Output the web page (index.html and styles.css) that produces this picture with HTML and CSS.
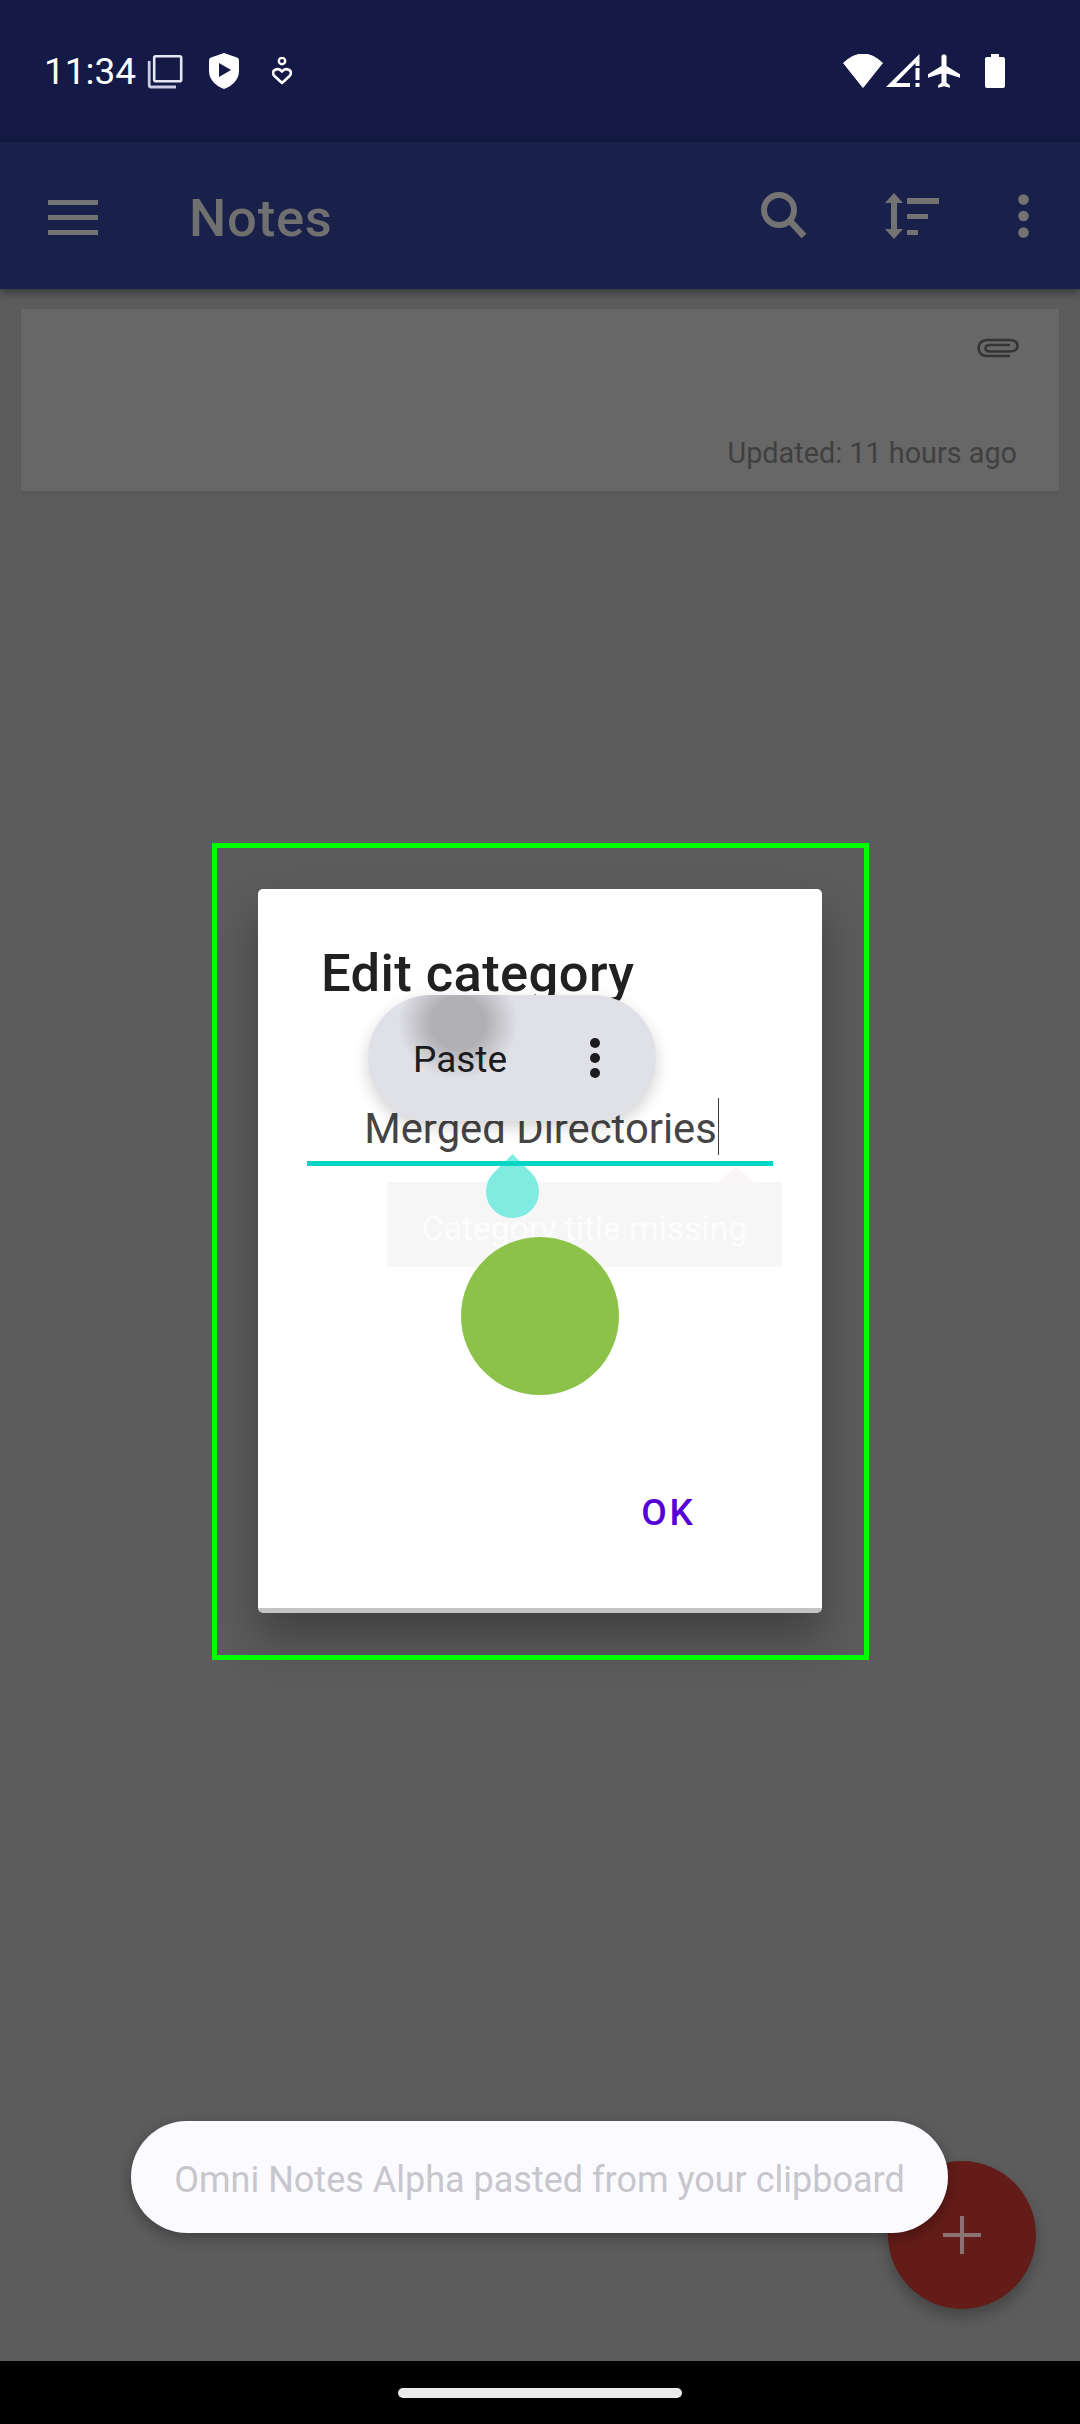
FILE: index.html
```html
<!DOCTYPE html>
<html lang="en">
<head>
    <meta charset="UTF-8">
    <meta name="viewport" content="width=device-width, initial-scale=1.0">
    <title>Notes - Edit category</title>
    <link rel="stylesheet" href="styles.css">
</head>
<body>
    <div class="screen">
        <div class="status">
            <span class="time">11:34</span>
            <svg class="ic-recents" width="36" height="35" viewBox="0 0 36 35">
                <rect x="7.2" y="2.2" width="27" height="25" rx="1.5" fill="none" stroke="#e4e6f2" stroke-width="2.6"/>
                <path d="M2.2 7V31q0 2 2 2H29" fill="none" stroke="#c9cce2" stroke-width="2.8"/>
            </svg>
            <svg class="ic-shield" width="30" height="36" viewBox="0 0 30 36">
                <path d="M15 0 28 4.5q2 .7 2 3V18C30 27 23 33 15 36 7 33 0 27 0 18V7.500q0-2.300 2-3z" fill="#fff"/>
                <path d="M10 10 22 17 10 24z" fill="#141a45"/>
            </svg>
            <svg class="ic-heart" width="20" height="28" viewBox="0 0 20 28">
                <circle cx="10" cy="4" r="3.200" fill="none" stroke="#fff" stroke-width="2.400"/>
                <path d="M10 26 2.500 19C.5 17 .8 14 2.800 13 5 11.800 8 12 10 14.500 12 12 15 11.800 17.200 13 19.200 14 19.500 17 17.500 19z" fill="none" stroke="#fff" stroke-width="2.600" stroke-linejoin="round"/>
            </svg>
            <div class="status-right">
                <svg class="ic-wifi" width="40" height="34" viewBox="0 0 40 34">
                    <path d="M.5 9Q20-9 39.500 9L20 33.500z" fill="#fff" stroke="#fff" stroke-linejoin="round"/>
                </svg>
                <svg class="ic-signal" width="34" height="34" viewBox="0 0 34 34">
                    <path d="M0 33 33.500 0V12H29.500V9L10 29H24V33z" fill="#fff"/>
                    <path d="M29.500 14h4V26h-4zM29.500 29h4v4h-4z" fill="#fff"/>
                </svg>
                <svg class="ic-plane" width="32" height="34" viewBox="2 2 19 20">
                    <path d="M21 16v-2l-8-5V3.500c0-.83-.67-1.500-1.500-1.500S10 2.670 10 3.500V9l-8 5v2l8-2.500V19l-2 1.500V22l3.500-1 3.500 1v-1.500L13 19v-5.500l8 2.500z" fill="#fff"/>
                </svg>
                <svg class="ic-battery" width="20" height="34" viewBox="0 0 20 34">
                    <path d="M6 0h8v3h4q2 0 2 2V32q0 2-2 2H2q-2 0-2-2V5q0-2 2-2h4z" fill="#fff"/>
                </svg>
            </div>
        </div>

        <div class="appbar">
            <div class="burger"><span></span><span></span><span></span></div>
            <h1 class="appbar-title">Notes</h1>
            <div class="appbar-actions">
                <svg width="46" height="47" viewBox="0 0 46 47">
                    <circle cx="18" cy="18" r="15" fill="none" stroke="#737373" stroke-width="6"/>
                    <path d="M29 29 43 44" fill="none" stroke="#737373" stroke-width="6.500"/>
                </svg>
                <svg class="ic-sort" width="54" height="46" viewBox="0 0 54 46">
                    <path d="M9 0 18 10H12V36H18L9 46 0 36H6V10H0z" fill="#737373"/>
                    <path d="M22 5H54V11H22zM22 21H43V26H22zM22 37H33V42H22z" fill="#737373"/>
                </svg>
                <svg class="ic-more" width="11" height="44" viewBox="0 0 11 44">
                    <circle cx="5.500" cy="5.500" r="5.300" fill="#737373"/>
                    <circle cx="5.500" cy="22" r="5.300" fill="#737373"/>
                    <circle cx="5.500" cy="38.500" r="5.300" fill="#737373"/>
                </svg>
            </div>
        </div>

        <div class="list">
            <div class="note">
                <svg class="clip" width="42" height="20" viewBox="0 0 42 20">
                    <path d="M33 18H10C5 18 1.500 14.500 1.500 10S5 2 10 2H32C37 2 40.500 4 40.500 8S37 13.500 32 13.500H13C10 13.500 8.500 12 8.500 10S10 7 13 7H33" fill="none" stroke="#343434" stroke-width="2.600"/>
                </svg>
                <div class="note-date">Updated: 11 hours ago</div>
            </div>
        </div>

        <div class="gesture"><span class="pill"></span></div>

        <!-- dialog and everything floating on top of it -->
        <div class="highlight"></div>
        <div class="dialog">
            <h2 class="dialog-title">Edit category</h2>
            <div class="field">Merged Directories<span class="cursor"></span></div>
            <div class="actions"><span class="ok">OK</span></div>

            <div class="tooltip"><span class="tooltip-arrow"></span>Category title missing</div>
            <div class="circle"></div>
            <div class="handle"></div>
            <div class="paste">
                <span class="paste-label">Paste</span>
                <span class="paste-more"><i></i><i></i><i></i></span>
            </div>
        </div>

        <div class="fab"><span class="plus"></span></div>
        <div class="snackbar">Omni Notes Alpha pasted from your clipboard</div>
    </div>
</body>
</html>
```

FILE: styles.css
```css
* {
    margin: 0;
    padding: 0;
    box-sizing: border-box;
}
html, body {
    background: #5c5c5c;
}
.screen {
    position: relative;
    width: 1080px;
    height: 2424px;
    overflow: hidden;
    display: flex;
    flex-direction: column;
    font-family: Roboto, "Liberation Sans", sans-serif;
}

/* status bar */
.status {
    height: 142px;
    flex-shrink: 0;
    background: #141a45;
    display: flex;
    align-items: center;
    padding: 0 75px 0 44px;
}
.time {
    font-size: 37px;
    color: #fff;
    width: 87px;
}
.ic-recents { margin-left: 16px; }
.ic-shield { margin-left: 26px; }
.ic-heart { margin-left: 33px; }
.status-right {
    margin-left: auto;
    display: flex;
    align-items: center;
}
.ic-signal { margin-left: 3px; }
.ic-plane { margin-left: 8px; }
.ic-battery { margin-left: 25px; }

/* app bar */
.appbar {
    height: 147px;
    flex-shrink: 0;
    background: #19214a;
    display: flex;
    align-items: center;
    padding: 0 51px 0 48px;
    box-shadow: 0 3px 10px rgba(0, 0, 0, 0.45);
    position: relative;
}
.burger {
    width: 50px;
    display: flex;
    flex-direction: column;
    gap: 10px;
    margin-top: 3px;
}
.burger span {
    height: 5px;
    background: #737373;
}
.appbar-title {
    margin-left: 91px;
    font-size: 52.5px;
    font-weight: 500;
    letter-spacing: 0.8px;
    color: #707070;
    margin-top: 5px;
}
.appbar-actions {
    margin-left: auto;
    display: flex;
    align-items: center;
}
.ic-sort { margin-left: 78px; }
.ic-more { margin-left: 79px; }

/* note list */
.list {
    flex: 1;
    padding: 20px 21px;
}
.note {
    height: 186px;
    background: #676767;
    border-bottom: 4px solid #595959;
    padding: 29px 42px 0 0;
    display: flex;
    flex-direction: column;
    align-items: flex-end;
}
.clip {
    margin-right: -2px;
}
.note-date {
    margin-top: 78px;
    font-size: 28.8px;
    color: #404040;
}

/* gesture bar */
.gesture {
    height: 63px;
    flex-shrink: 0;
    background: #000;
    display: flex;
    justify-content: center;
    padding-top: 27px;
}
.pill {
    width: 284px;
    height: 10px;
    border-radius: 5px;
    background: #ebebeb;
}

/* green marker */
.highlight {
    position: absolute;
    left: 212px;
    top: 843px;
    width: 657px;
    height: 817px;
    border: 5px solid #00ff00;
    z-index: 3;
}

/* dialog */
.dialog {
    position: absolute;
    left: 258px;
    top: 889px;
    width: 564px;
    height: 724px;
    background: #fff;
    border-bottom: 5px solid #c4c4c4;
    border-radius: 5px;
    box-shadow: 0 26px 46px rgba(0, 0, 0, 0.3);
    display: flex;
    flex-direction: column;
    padding: 0 49px;
    z-index: 2;
}
.dialog-title {
    font-size: 52.5px;
    font-weight: 500;
    letter-spacing: 0.4px;
    color: #212121;
    margin: 53px 0 0 14px;
    line-height: 62px;
}
.field {
    margin-top: 90px;
    height: 72px;
    padding-left: 3px;
    font-size: 41.8px;
    line-height: 70px;
    color: #454545;
    text-align: center;
    border-bottom: 5px solid #05d5c4;
    position: relative;
    z-index: 1;
}
.cursor {
    display: inline-block;
    width: 1px;
    height: 57px;
    background: #3a3a3a;
    margin-left: 1px;
    vertical-align: -12px;
}
.actions {
    margin-top: auto;
    margin-bottom: 74px;
    display: flex;
    justify-content: flex-end;
    padding-right: 77px;
}
.ok {
    font-size: 37px;
    font-weight: 500;
    letter-spacing: 3px;
    color: #5600d8;
}

/* floating bits inside the dialog */
.tooltip {
    position: absolute;
    left: 129px;
    top: 293px;
    width: 395px;
    height: 85px;
    background: rgba(0, 0, 0, 0.035);
    color: #fdfdfd;
    font-size: 33.6px;
    text-align: center;
    line-height: 94px;
}
.tooltip-arrow {
    position: absolute;
    left: 331px;
    top: -15px;
    border: 18px solid transparent;
    border-top: 0;
    border-bottom: 15px solid #faf6f6;
}
.circle {
    position: absolute;
    left: 203px;
    top: 348px;
    width: 158px;
    height: 158px;
    border-radius: 50%;
    background: #88c043;
    opacity: 0.97;
}
.handle {
    position: absolute;
    left: 228px;
    top: 276px;
    width: 53px;
    height: 53px;
    background: #80ebe1;
    border-radius: 50% 0 50% 50%;
    transform: rotate(-45deg);
}
.paste {
    position: absolute;
    left: 110px;
    top: 106px;
    width: 288px;
    height: 126px;
    border-radius: 63px;
    background: radial-gradient(ellipse 60px 56px at 90px 28px, #b0b0b4 45%, rgba(176, 176, 180, 0) 100%), #e0e1e7;
    box-shadow: 0 6px 16px rgba(0, 0, 0, 0.18);
    display: flex;
    align-items: center;
    padding: 2px 56px 0 45px;
    z-index: 2;
}
.paste-label {
    font-size: 37px;
    color: #1b1b20;
}
.paste-more {
    margin-left: auto;
    display: flex;
    flex-direction: column;
    gap: 5px;
    margin-top: -2px;
}
.paste-more i {
    display: block;
    width: 10px;
    height: 10px;
    border-radius: 50%;
    background: #1b1b20;
}

/* bottom floaters */
.fab {
    position: absolute;
    left: 888px;
    top: 2161px;
    width: 148px;
    height: 148px;
    border-radius: 50%;
    background: #641c18;
    box-shadow: 0 8px 14px rgba(0, 0, 0, 0.25);
    display: flex;
    align-items: center;
    justify-content: center;
}
.plus {
    position: relative;
    width: 38px;
    height: 38px;
    background:
        linear-gradient(#8a7372, #8a7372) center / 4px 38px no-repeat,
        linear-gradient(#8a7372, #8a7372) center / 38px 4px no-repeat;
}
.snackbar {
    position: absolute;
    left: 131px;
    top: 2121px;
    width: 817px;
    height: 112px;
    border-radius: 56px;
    background: #fbfaff;
    box-shadow: 0 5px 14px rgba(0, 0, 0, 0.3);
    color: #c6c6cc;
    font-size: 36px;
    line-height: 118px;
    text-align: center;
}
```
